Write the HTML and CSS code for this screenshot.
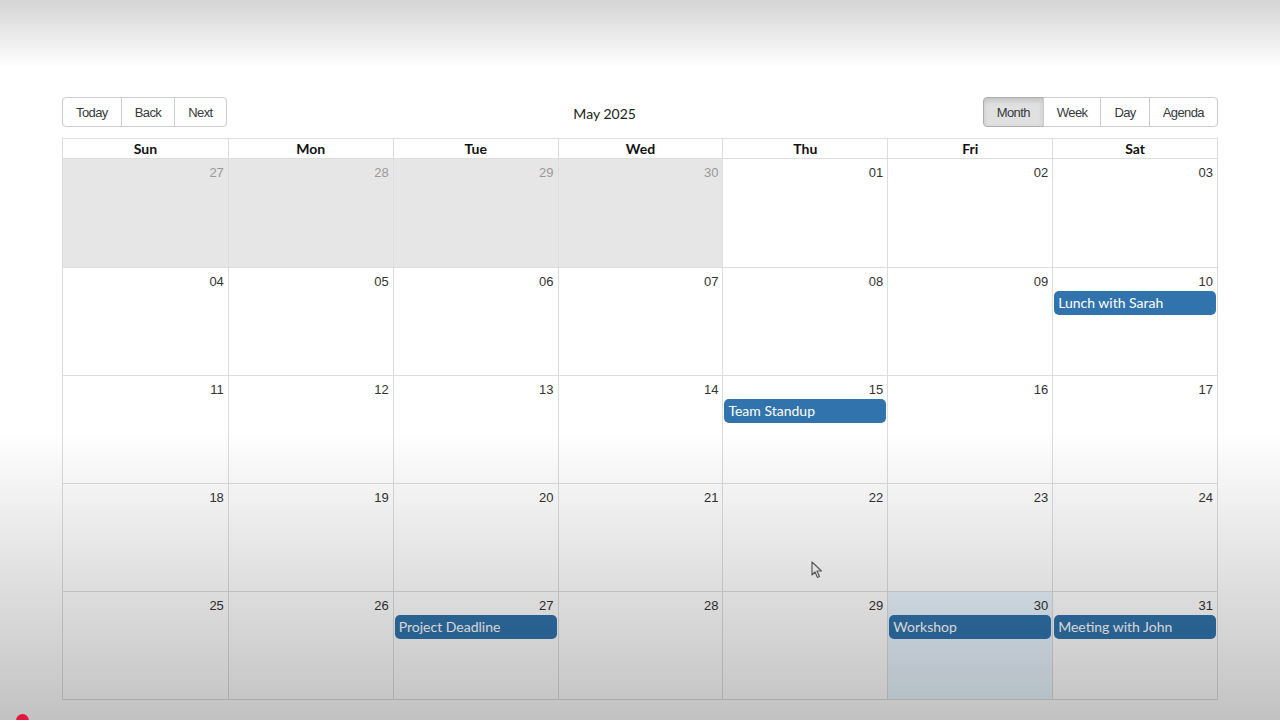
FILE: index.html
```html
<!DOCTYPE html>
<html lang="en">
<head>
    <meta charset="UTF-8">
    <meta name="viewport" content="width=device-width, initial-scale=1.0">
    <title>Calendar</title>
    <link rel="stylesheet" href="styles.css">
</head>
<body>
    <div class="container">
        <div class="toolbar">
            <div class="btn-group">
                <button>Today</button>
                <button>Back</button>
                <button>Next</button>
            </div>
            <div class="toolbar-label">May 2025</div>
            <div class="btn-group">
                <button class="active">Month</button>
                <button>Week</button>
                <button>Day</button>
                <button>Agenda</button>
            </div>
        </div>

        <div class="month-view">
            <div class="month-header">
                <div class="header-cell">Sun</div>
                <div class="header-cell">Mon</div>
                <div class="header-cell">Tue</div>
                <div class="header-cell">Wed</div>
                <div class="header-cell">Thu</div>
                <div class="header-cell">Fri</div>
                <div class="header-cell">Sat</div>
            </div>

            <div class="month-row">
                <div class="day off-range"><div class="date">27</div></div>
                <div class="day off-range"><div class="date">28</div></div>
                <div class="day off-range"><div class="date">29</div></div>
                <div class="day off-range"><div class="date">30</div></div>
                <div class="day"><div class="date">01</div></div>
                <div class="day"><div class="date">02</div></div>
                <div class="day"><div class="date">03</div></div>
            </div>

            <div class="month-row">
                <div class="day"><div class="date">04</div></div>
                <div class="day"><div class="date">05</div></div>
                <div class="day"><div class="date">06</div></div>
                <div class="day"><div class="date">07</div></div>
                <div class="day"><div class="date">08</div></div>
                <div class="day"><div class="date">09</div></div>
                <div class="day">
                    <div class="date">10</div>
                    <div class="event">Lunch with Sarah</div>
                </div>
            </div>

            <div class="month-row">
                <div class="day"><div class="date">11</div></div>
                <div class="day"><div class="date">12</div></div>
                <div class="day"><div class="date">13</div></div>
                <div class="day"><div class="date">14</div></div>
                <div class="day">
                    <div class="date">15</div>
                    <div class="event">Team Standup</div>
                </div>
                <div class="day"><div class="date">16</div></div>
                <div class="day"><div class="date">17</div></div>
            </div>

            <div class="month-row">
                <div class="day"><div class="date">18</div></div>
                <div class="day"><div class="date">19</div></div>
                <div class="day"><div class="date">20</div></div>
                <div class="day"><div class="date">21</div></div>
                <div class="day"><div class="date">22</div></div>
                <div class="day"><div class="date">23</div></div>
                <div class="day"><div class="date">24</div></div>
            </div>

            <div class="month-row">
                <div class="day"><div class="date">25</div></div>
                <div class="day"><div class="date">26</div></div>
                <div class="day">
                    <div class="date">27</div>
                    <div class="event">Project Deadline</div>
                </div>
                <div class="day"><div class="date">28</div></div>
                <div class="day"><div class="date">29</div></div>
                <div class="day today">
                    <div class="date">30</div>
                    <div class="event">Workshop</div>
                </div>
                <div class="day">
                    <div class="date">31</div>
                    <div class="event">Meeting with John</div>
                </div>
            </div>
        </div>
    </div>

    <!-- mouse pointer -->
    <svg class="pointer" width="12" height="18" viewBox="0 0 12 18">
        <path d="M1 1 L1 14 L4 11 L6.5 16.5 L8.5 15.5 L6 10 L10.5 10 Z" fill="#fff" stroke="#666" stroke-width="1.2" stroke-linejoin="round"/>
    </svg>
    <div class="rec-dot"></div>
</body>
</html>
```

FILE: styles.css
```css
* {
    margin: 0;
    padding: 0;
    box-sizing: border-box;
}

body {
    font-family: Lato, "Noto Sans", sans-serif;
    background: #fff;
    color: #373a3c;
    width: 1280px;
    height: 720px;
    overflow: hidden;
}

/* soft shading over the whole screen */
body::after {
    content: "";
    position: fixed;
    inset: 0;
    pointer-events: none;
    background: linear-gradient(to bottom,
        rgba(0,0,0,0.17) 0,
        rgba(0,0,0,0) 68px,
        rgba(0,0,0,0) 430px,
        rgba(0,0,0,0.24) 720px);
}

.container {
    width: 1156px;
    margin: 0 0 0 62px;
    padding-top: 97px;
}

.toolbar {
    display: flex;
    align-items: center;
    margin-bottom: 11px;
}

.toolbar-label {
    flex: 1;
    text-align: center;
    font-size: 14px;
    color: #222;
    padding-top: 2px;
}

.btn-group {
    display: flex;
}

.btn-group button {
    font-family: "Liberation Sans", Arial, sans-serif;
    font-size: 13px;
    letter-spacing: -0.6px;
    color: #373a3c;
    background: #fff;
    border: 1px solid #ccc;
    height: 30px;
    padding: 0 13px;
    margin-left: -1px;
    cursor: pointer;
}

.btn-group button:first-child {
    margin-left: 0;
    border-radius: 4px 0 0 4px;
}

.btn-group button:last-child {
    border-radius: 0 4px 4px 0;
}

.btn-group button.active {
    background: #e0e0e0;
    border-color: #adadad;
    box-shadow: inset 0 3px 5px rgba(0,0,0,0.125);
}

.month-view {
    border: 1px solid #ddd;
}

.month-header {
    display: grid;
    grid-template-columns: repeat(7, 1fr);
    border-bottom: 1px solid #ddd;
}

.header-cell {
    font-weight: 700;
    font-size: 14px;
    line-height: 19px;
    text-align: center;
    color: #111;
}

.header-cell + .header-cell {
    border-left: 1px solid #ddd;
}

.month-row {
    display: grid;
    grid-template-columns: repeat(7, 1fr);
    height: 108px;
}

.month-row + .month-row {
    border-top: 1px solid #ddd;
}

.day {
    background: #fff;
    padding: 0 1px;
}

.day + .day {
    border-left: 1px solid #ddd;
}

.day.off-range {
    background: #e6e6e6;
}

.day.off-range .date {
    color: #999;
}

.day.today {
    background: #eaf6ff;
}

.date {
    font-family: "Liberation Sans", Arial, sans-serif;
    font-size: 13px;
    line-height: 16px;
    text-align: right;
    padding: 6px 3px 0 0;
    color: #333;
}

.event {
    margin-top: 1px;
    background: #3174ad;
    color: #fff;
    border-radius: 5px;
    padding: 2px 4px;
    font-size: 14px;
    line-height: 20px;
    white-space: nowrap;
    overflow: hidden;
}

.pointer {
    position: absolute;
    left: 811px;
    top: 561px;
}

.rec-dot {
    position: absolute;
    z-index: 2;
    left: 16px;
    top: 714px;
    width: 13px;
    height: 13px;
    border-radius: 50%;
    background: #e3173b;
}
```
